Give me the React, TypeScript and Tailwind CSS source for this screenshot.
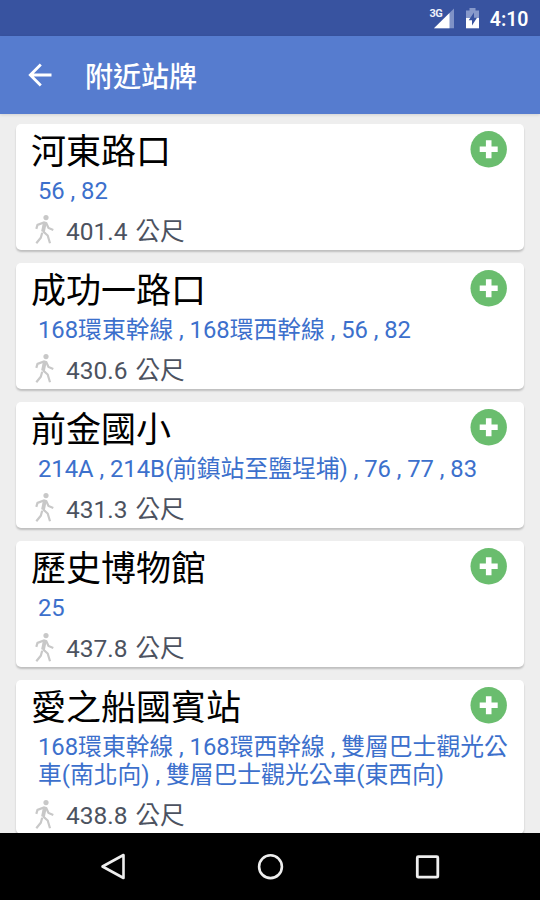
import React from 'react';

type Stop = { name: string; routes: string[]; distance: string };

const stops: Stop[] = [
  { name: '河東路口', routes: ['56 , 82'], distance: '401.4 公尺' },
  { name: '成功一路口', routes: ['168環東幹線 , 168環西幹線 , 56 , 82'], distance: '430.6 公尺' },
  { name: '前金國小', routes: ['214A , 214B(前鎮站至鹽埕埔) , 76 , 77 , 83'], distance: '431.3 公尺' },
  { name: '歷史博物館', routes: ['25'], distance: '437.8 公尺' },
  {
    name: '愛之船國賓站',
    routes: ['168環東幹線 , 168環西幹線 , 雙層巴士觀光公', '車(南北向) , 雙層巴士觀光公車(東西向)'],
    distance: '438.8 公尺',
  },
];

function StatusBar() {
  return (
    <header className="flex h-9 shrink-0 items-center justify-end bg-[#3853a0] pr-[11.500px] text-white">
      <svg className="mr-[10px] h-9 w-[26px]" viewBox="0 0 26 36" aria-hidden="true">
        <path d="M25 8.500V28.300H5Z" fill="#7f92c6" />
        <path d="M20.500 13V28.300H5Z" fill="#fff" />
        <text x="0.500" y="17" fontSize="11" fontWeight="700" letterSpacing="-0.5" fill="#eef1fa" className="font-['Roboto']">3G</text>
      </svg>
      <svg className="mr-[9.500px] h-9 w-[15px]" viewBox="0 0 15 36" aria-hidden="true">
        <path d="M4.500 8h6v2.500H14V19H1v-8.500h3.500z" fill="#8799ca" />
        <path d="M1 18H14V28.300H1Z" fill="#fff" />
        <path d="M9 12.500L3.700 20.200H7V25.500L12 17.800H9Z" fill="#3853a0" />
      </svg>
      <span className="pt-[3px] text-[19.500px] font-semibold leading-[33px]">4:10</span>
    </header>
  );
}

function Walker() {
  return (
    <svg className="h-[30px] w-5 shrink-0" viewBox="0 0 20 30" fill="none" stroke="#c8c8c8" strokeWidth="2.200" aria-hidden="true">
      <circle cx="12" cy="3.600" r="2.600" fill="#c8c8c8" stroke="none" />
      <path d="M2.300 14.900L3.500 10.900L10 8.500L12.300 9.200L14.500 13.900L19.300 15.900" />
      <path d="M10.700 9.200L9 17.700" strokeWidth="3.800" />
      <path d="M8.800 17.200L13.700 21.500L16 29.200" />
      <path d="M8.200 18.700L6.800 23.700L2.300 29.200" />
    </svg>
  );
}

function StopCard({ stop }: { stop: Stop }) {
  return (
    <article className="flex shrink-0 items-start rounded-[5px] bg-white pb-[4.200px] pl-[15px] pr-[17px] pt-1 shadow-[0_2px_2px_rgba(0,0,0,0.2)]">
      <div className="min-w-0 flex-1">
        <h2 className="h-[49px] whitespace-nowrap text-[35px] font-normal leading-[50px] text-black">{stop.name}</h2>
        <div className="pl-[7px] text-[23.800px] leading-7 text-[#3c70cc] [word-spacing:-0.1px]">
          {stop.routes.map((line) => (
            <p key={line} className="h-7 whitespace-nowrap">{line}</p>
          ))}
        </div>
        <div className="mt-[8px] flex h-[33px] items-center pl-[3px] text-[#4c5260]">
          <Walker />
          <span className="ml-[12px] whitespace-nowrap pt-[5px] text-[24.500px] leading-[30px] [word-spacing:2px]">{stop.distance}</span>
        </div>
      </div>
      <svg className="-ml-10 mt-[3px] h-[37px] w-[37px] shrink-0" viewBox="0 0 37 37" role="img" aria-label="add">
        <circle cx="18.700" cy="18.300" r="18.200" fill="#6abd6e" />
        <path d="M18.700 9.300V27.300M9.700 18.300H27.700" stroke="#fff" strokeWidth="5.600" />
      </svg>
    </article>
  );
}

function NavBar() {
  return (
    <nav className="flex h-[67px] shrink-0 items-center justify-between bg-black pl-[98px] pr-[97px]">
      <svg className="h-8 w-8" viewBox="0 0 32 32" fill="none" stroke="#eee" strokeWidth="2.600" aria-hidden="true">
        <path d="M25.500 4V27L4.500 15.500Z" strokeLinejoin="round" />
      </svg>
      <svg className="h-8 w-8" viewBox="0 0 32 32" fill="none" stroke="#eee" strokeWidth="2.600" aria-hidden="true">
        <circle cx="15.500" cy="15.700" r="11.400" />
      </svg>
      <svg className="h-8 w-8" viewBox="0 0 32 32" fill="none" stroke="#eee" strokeWidth="2.800" aria-hidden="true">
        <rect x="6.300" y="5.700" width="20.500" height="20.500" rx="1" />
      </svg>
    </nav>
  );
}

export default function App() {
  return (
    <div lang="zh-Hant" className="flex h-[900px] w-[540px] flex-col overflow-hidden bg-[#eeeeee] font-['Roboto','Noto_Sans_CJK_TC',sans-serif]">
      <StatusBar />
      <div className="z-10 flex h-[78px] shrink-0 items-center bg-[#567ccf] pl-[28px] text-white shadow-[0_1px_3px_rgba(0,0,0,0.12)]">
        <svg className="h-6 w-6" viewBox="0 0 24 24" fill="none" stroke="#fff" strokeWidth="2.800" aria-hidden="true">
          <path d="M23.500 12H3M12.800 1.500L2.300 12L12.800 22.500" />
        </svg>
        <h1 className="ml-[33px] pt-1.5 text-[28px] font-medium leading-10">附近站牌</h1>
      </div>
      <main className="flex min-h-0 flex-1 flex-col gap-[13px] overflow-hidden px-4 pt-[9.500px]">
        {stops.map((stop) => (
          <StopCard key={stop.name} stop={stop} />
        ))}
      </main>
      <NavBar />
    </div>
  );
}
